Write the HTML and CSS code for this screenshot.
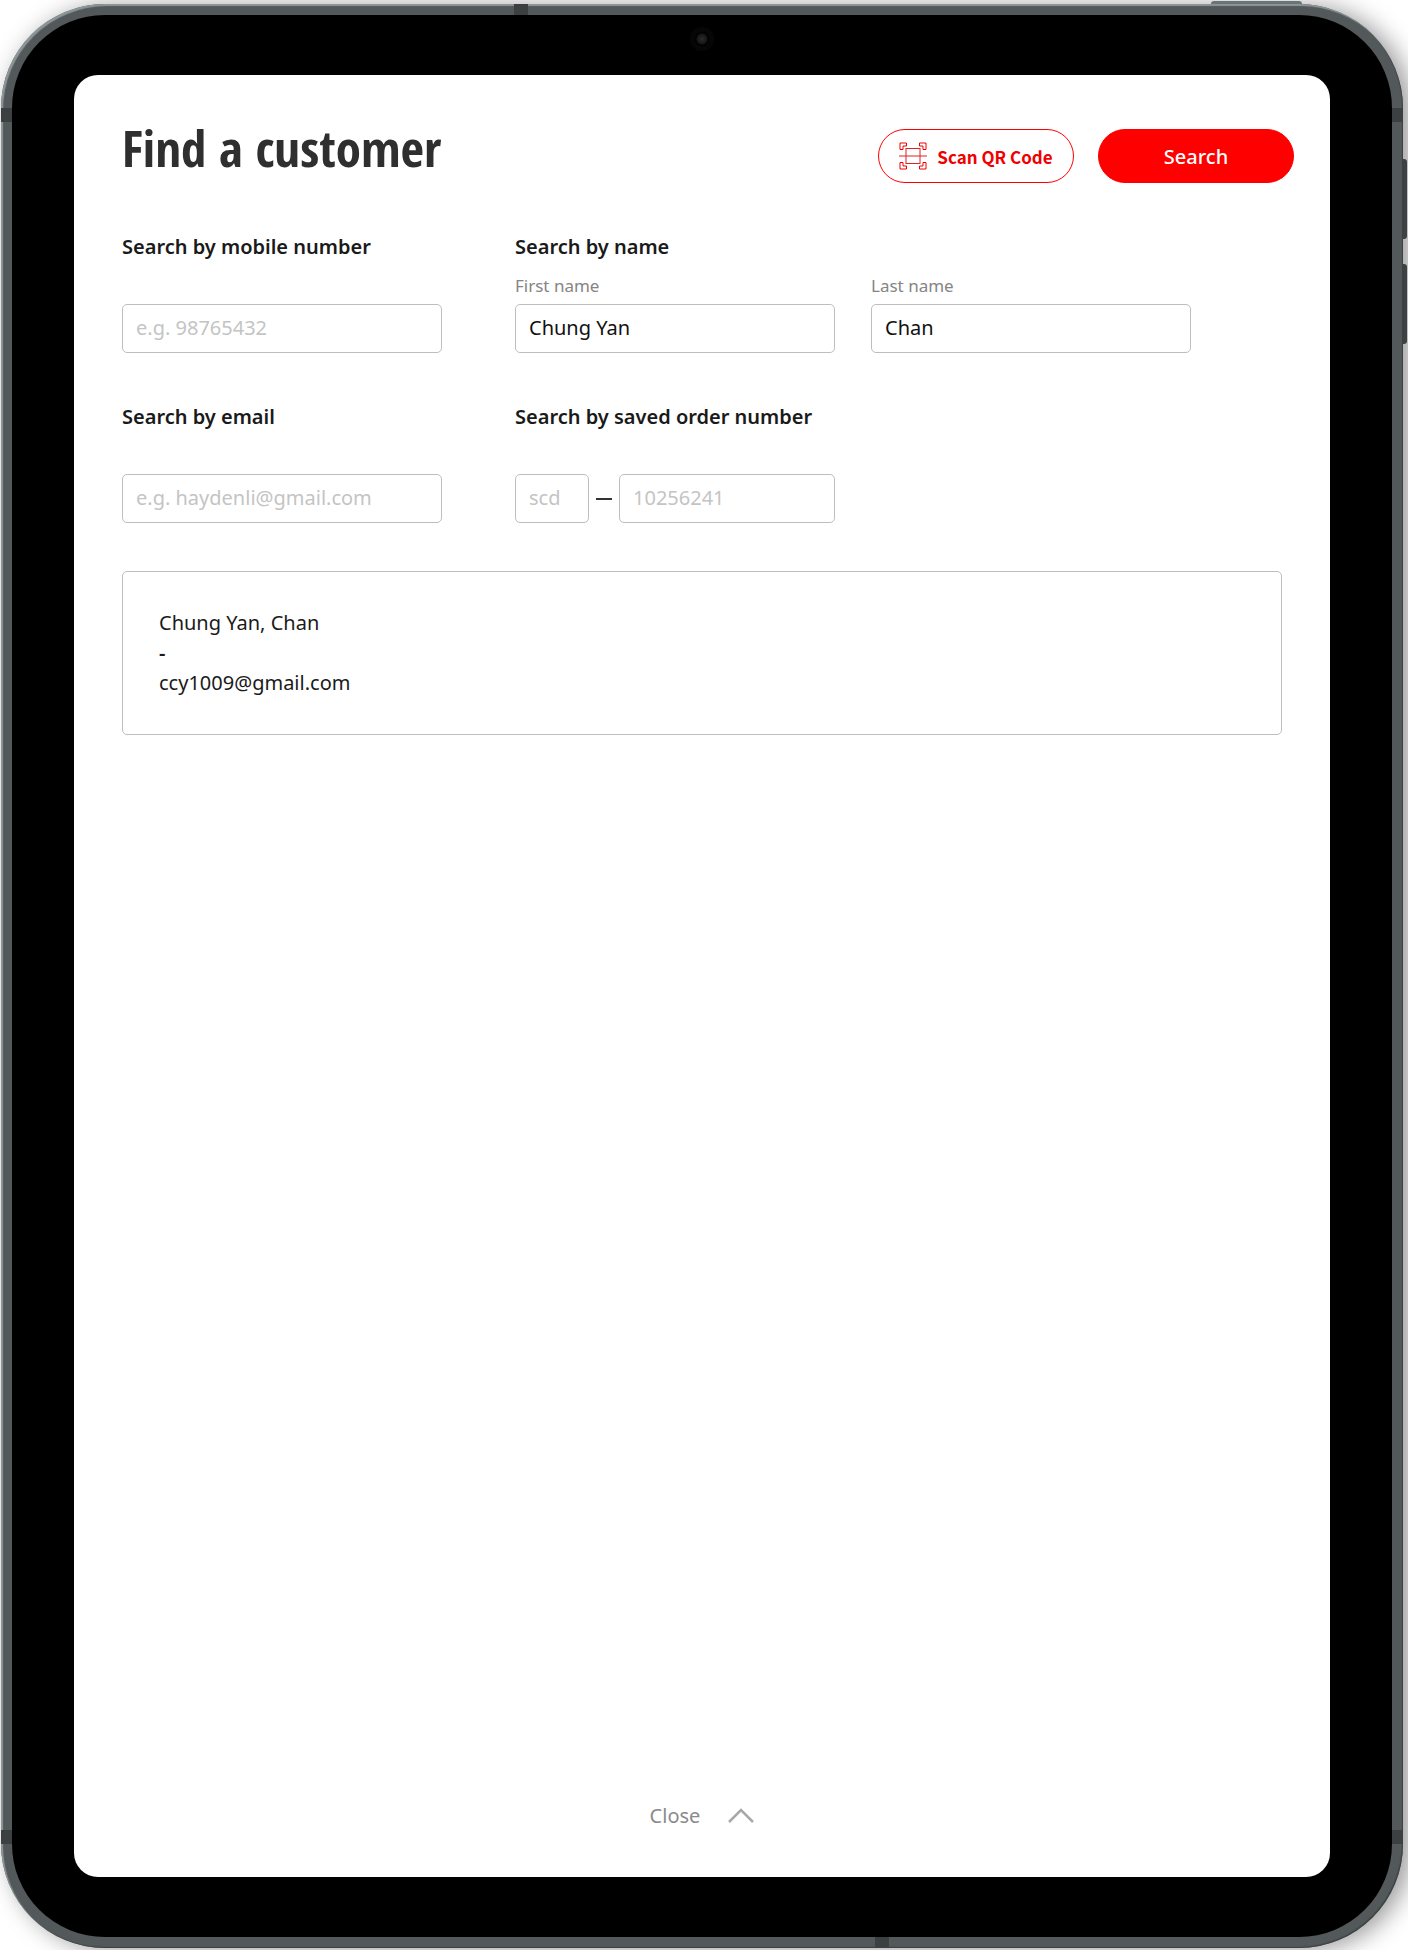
FILE: index.html
```html
<!DOCTYPE html>
<html lang="en">
<head>
    <meta charset="UTF-8">
    <meta name="viewport" content="width=device-width, initial-scale=1.0">
    <title>Find a customer</title>
    <link rel="stylesheet" href="styles.css">
</head>
<body>
    <div class="device">
        <!-- Hardware buttons and antenna bands -->
        <span class="key key-power"></span>
        <span class="key key-volume-up"></span>
        <span class="key key-volume-down"></span>
        <span class="band band-top"></span>
        <span class="band band-bottom"></span>
        <span class="band band-left band-upper"></span>
        <span class="band band-left band-lower"></span>
        <span class="band band-right band-upper"></span>
        <span class="band band-right band-lower"></span>

        <div class="bezel">
            <span class="camera"></span>
            <main class="screen">
                <header class="page-header">
                    <h1>Find a customer</h1>
                    <div class="actions">
                        <button type="button" class="btn btn-outline">
                            <svg width="28" height="28" viewBox="0 0 28 28" fill="none" stroke="currentColor" aria-hidden="true">
                                <path d="M1 1h6.500v3H4v3.500H1zM27 1h-6.500v3H24v3.500h3zM1 27h6.500v-3H4v-3.500H1zM27 27h-6.500v-3H24v-3.500h3z"/>
                                <rect x="7" y="6.500" width="14" height="15" stroke="#d22"/>
                                <path d="M0 14h28" stroke="#d22"/>
                            </svg>
                            Scan QR Code
                        </button>
                        <button type="submit" form="searchForm" class="btn btn-primary">Search</button>
                    </div>
                </header>

                <form id="searchForm" class="search-form">
                    <section>
                        <h2><label for="mobile">Search by mobile number</label></h2>
                        <div class="field">
                            <input type="tel" id="mobile" placeholder="e.g. 98765432">
                        </div>
                    </section>
                    <section>
                        <h2>Search by name</h2>
                        <div class="pair">
                            <div class="field">
                                <label for="firstName">First name</label>
                                <input type="text" id="firstName" value="Chung Yan">
                            </div>
                            <div class="field">
                                <label for="lastName">Last name</label>
                                <input type="text" id="lastName" value="Chan">
                            </div>
                        </div>
                    </section>
                    <section>
                        <h2><label for="email">Search by email</label></h2>
                        <div class="field">
                            <input type="email" id="email" placeholder="e.g. haydenli@gmail.com">
                        </div>
                    </section>
                    <section>
                        <h2><label for="orderNumber">Search by saved order number</label></h2>
                        <div class="pair">
                            <div class="field">
                                <div class="order-number">
                                    <input type="text" class="order-prefix" aria-label="Order prefix" placeholder="scd">
                                    <span class="dash"></span>
                                    <input type="text" id="orderNumber" placeholder="10256241">
                                </div>
                            </div>
                        </div>
                    </section>
                </form>

                <article class="result">
                    <p>Chung Yan, Chan</p>
                    <p class="no-phone">-</p>
                    <p>ccy1009@gmail.com</p>
                </article>

                <button type="button" class="close-btn">
                    Close
                    <svg width="26" height="16" viewBox="0 0 26 16" fill="none" stroke="#a8a8a8" stroke-width="2.500" aria-hidden="true">
                        <path d="M1 14L13 2l12 12"/>
                    </svg>
                </button>
            </main>
        </div>
    </div>
</body>
</html>
```
FILE: styles.css
```css
* {
    box-sizing: border-box;
}
body {
    margin: 0;
    min-height: 100vh;
    display: flex;
    padding: 4px 5px 2px 1px;
    background: #fff;
    color: #1a1a1a;
    font-family: "Noto Sans", "Open Sans", sans-serif;
    font-size: 20px;
    overflow-x: hidden;
}
h1, h2, p {
    margin: 0;
}
button, input {
    font: inherit;
}

/* Tablet frame */
.device {
    position: relative;
    flex: 1;
    display: flex;
    padding: 11px;
    border-radius: 104px;
    background: #53585a;
    box-shadow: inset 2px 2px 1px #8d9799, inset -1px -1px 1px #3c4142, 8px 2px 24px rgba(0, 0, 0, 0.4);
}
.bezel {
    position: relative;
    flex: 1;
    display: flex;
    padding: 60px 62px;
    border-radius: 93px;
    background: #000;
}
.camera {
    position: absolute;
    top: 12px;
    left: 50%;
    width: 24px;
    height: 24px;
    margin-left: -12px;
    border-radius: 50%;
    background: radial-gradient(circle, #2c2c2c 0, #151515 5px, #000 6px, #060606 8px);
}
.band {
    position: absolute;
    background: #3c4041;
}
.band-top, .band-bottom {
    left: 513px;
    width: 14px;
    height: 11px;
}
.band-top {
    top: 0;
}
.band-bottom {
    bottom: 0;
    left: auto;
    right: 514px;
}
.band-left, .band-right {
    width: 11px;
    height: 14px;
}
.band-left {
    left: 0;
}
.band-right {
    right: 0;
}
.band-upper {
    top: 104px;
}
.band-lower {
    bottom: 104px;
}
.key {
    position: absolute;
    background: #3c4142;
}
.key-power {
    top: -3px;
    right: 101px;
    width: 91px;
    height: 3px;
    border-radius: 3px 3px 0 0;
    background: #6a7476;
}
.key-volume-up, .key-volume-down {
    right: -4px;
    width: 4px;
    height: 80px;
    border-radius: 0 3px 3px 0;
}
.key-volume-up {
    top: 155px;
}
.key-volume-down {
    top: 260px;
}

/* Screen */
.screen {
    flex: 1;
    display: flex;
    flex-direction: column;
    padding: 48px 36px 47px 48px;
    border-radius: 24px;
    background: #fff;
}
.page-header {
    display: flex;
    justify-content: space-between;
    align-items: flex-start;
    margin-bottom: 50px;
}
h1 {
    font-family: "Open Sans Condensed", "Noto Sans", sans-serif;
    font-size: 51px;
    font-weight: 700;
    line-height: 48px;
    color: #2f2f2f;
}
.actions {
    display: flex;
    gap: 24px;
    padding-top: 6px;
}
.btn {
    display: flex;
    align-items: center;
    justify-content: center;
    gap: 10px;
    width: 196px;
    height: 54px;
    padding: 0;
    border: 1px solid #f00;
    border-radius: 27px;
    cursor: pointer;
}
.btn-outline {
    background: #fff;
    color: #f00000;
    font-family: "Noto Sans CJK SC", sans-serif;
    font-size: 17px;
    font-weight: 700;
}
.btn-primary {
    background: #f00;
    color: #fff;
    font-weight: 500;
}

/* Search form */
.search-form {
    display: grid;
    grid-template-columns: 320fr 676fr;
    gap: 50px 73px;
    padding-right: 103px;
    margin-bottom: 48px;
}
.search-form h2 {
    margin-bottom: 12px;
    font-size: 20px;
    font-weight: 600;
    line-height: 28px;
}
.pair {
    display: grid;
    grid-template-columns: 1fr 1fr;
    gap: 36px;
}
.field {
    display: flex;
    flex-direction: column;
    justify-content: flex-end;
    min-height: 80px;
}
.field label {
    margin-bottom: 6px;
    font-size: 17px;
    line-height: 24px;
    color: #858585;
}
input {
    width: 100%;
    min-width: 0;
    height: 49px;
    padding: 0 13px 2px;
    border: 1px solid #bebebe;
    border-radius: 5px;
    background: #fff;
    color: #111;
}
input::placeholder {
    color: #c4c4c4;
    opacity: 1;
}
.order-number {
    display: flex;
    align-items: center;
    gap: 7px;
}
.order-number .order-prefix {
    flex: 0 0 74px;
}
.dash {
    flex: 0 0 16px;
    height: 2px;
    background: #333;
}

/* Search result */
.result {
    margin-right: 12px;
    padding: 36px;
    border: 1px solid #bebebe;
    border-radius: 5px;
    line-height: 30px;
}
.no-phone {
    font-weight: 600;
}

.close-btn {
    display: flex;
    align-items: center;
    align-self: center;
    gap: 28px;
    margin: auto 12px 0 0;
    padding: 0;
    border: none;
    background: none;
    color: #8a8a8a;
    line-height: 28px;
    cursor: pointer;
}
```
